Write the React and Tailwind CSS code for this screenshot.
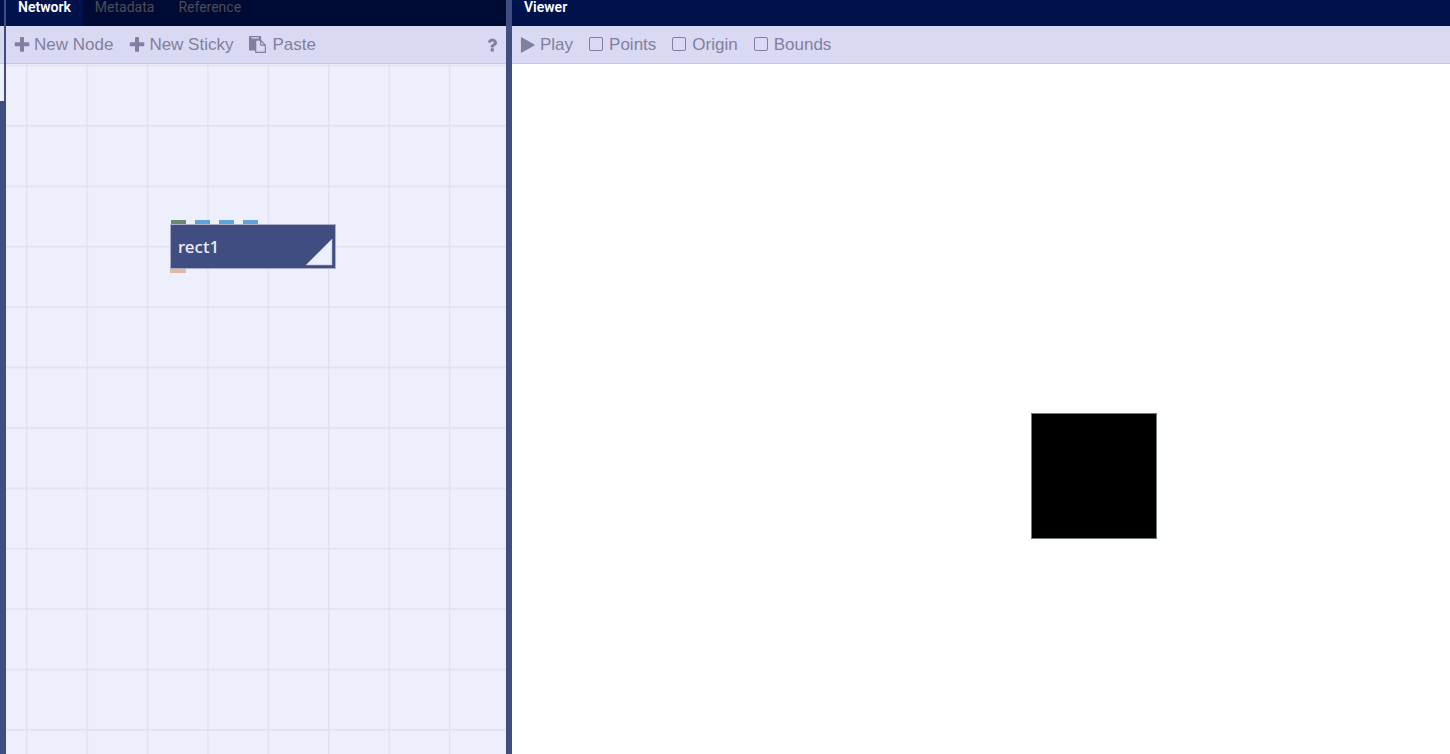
import React, { useState } from "react";

const PLUS =
  "M1600 736v192q0 40-28 68t-68 28h-416v416q0 40-28 68t-68 28h-192q-40 0-68-28t-28-68v-416h-416q-40 0-68-28t-28-68v-192q0-40 28-68t68-28h416v-416q0-40 28-68t68-28h192q40 0 68 28t28 68v416h416q40 0 68 28t28 68z";
const PASTE =
  "M768 1664h896v-640h-416q-40 0-68-28t-28-68v-416h-384v1152zm256-1440v-64q0-13-9.5-22.5t-22.5-9.5h-704q-13 0-22.5 9.5t-9.5 22.5v64q0 13 9.5 22.5t22.5 9.5h704q13 0 22.5-9.5t9.5-22.5zm256 672h299l-299-299v299zm512 128v672q0 40-28 68t-68 28h-960q-40 0-68-28t-28-68v-160h-544q-40 0-68-28t-28-68v-1344q0-40 28-68t68-28h1088q40 0 68 28t28 68v328q21 13 36 28l408 408q28 28 48 76t20 88z";
const PLAY =
  "M1576 927l-1328 738q-23 13-39.5 3t-16.5-36v-1472q0-26 16.5-36t39.5 3l1328 738q23 13 23 31t-23 31z";
const QUESTION =
  "M1088 1256v240q0 16-12 28t-28 12h-240q-16 0-28-12t-12-28v-240q0-16 12-28t28-12h240q16 0 28 12t12 28zm316-600q0 54-15.5 101t-35 76.5-55 59.5-57.5 43.5-61 35.5q-41 23-68.5 65t-27.5 67q0 17-12 32.5t-28 15.5h-240q-15 0-25.5-18.5t-10.5-37.5v-45q0-83 65-156.5t143-108.5q59-27 84-56t25-76q0-42-46.5-74t-107.5-32q-65 0-108 29-35 25-107 115-13 16-31 16-12 0-25-8l-164-125q-13-10-15.5-25t5.5-28q160-266 464-266 80 0 161 31t146 83 106 127.5 41 158.5z";

function Icon({ path, viewBox = "0 0 1792 1792", className = "size-4" }) {
  return (
    <svg viewBox={viewBox} className={className} fill="currentColor" aria-hidden="true">
      <path d={path} />
    </svg>
  );
}

function Tab({ active, children }) {
  return (
    <button
      type="button"
      className={
        "h-full px-3 pb-3 font-['Roboto','Noto_Sans',sans-serif] text-sm leading-[14px] " +
        (active ? "bg-[#00124c] font-semibold text-white" : "text-[#4c4c58]")
      }
    >
      {children}
    </button>
  );
}

function Toolbar({ children }) {
  return (
    <div className="flex h-[38px] shrink-0 items-center gap-4 border-b border-[#c6c5e8] bg-[#dad9f3] px-2 text-[#817f9f]">
      {children}
    </div>
  );
}

function Check({ label }) {
  const [on, setOn] = useState(false);
  return (
    <label className="flex items-center gap-1.5">
      <input
        type="checkbox"
        checked={on}
        onChange={(e) => setOn(e.target.checked)}
        className="mb-0.5 size-3.5 appearance-none rounded-xs border border-[#817f9f] checked:bg-[#817f9f]"
      />
      {label}
    </label>
  );
}

function Grid() {
  return (
    <svg className="block size-full" aria-hidden="true">
      <defs>
        <pattern id="grid" x="20" y="0.7" width="60.4" height="60.4" patternUnits="userSpaceOnUse">
          <path d="M0.7 0V60.4M0 0.7H60.4" fill="none" stroke="#dfe1ee" strokeWidth="1.4" />
        </pattern>
      </defs>
      <rect width="100%" height="100%" fill="url(#grid)" />
    </svg>
  );
}

function Node() {
  return (
    <div className="absolute top-[156px] left-[164px] w-[166px]">
      <div className="flex h-1 gap-[9px] pl-px">
        <i className="w-[15px] bg-[#6b8a70]" />
        <i className="w-[15px] bg-[#5fa3da]" />
        <i className="w-[15px] bg-[#5fa3da]" />
        <i className="w-[15px] bg-[#5fa3da]" />
      </div>
      <div className="flex h-[45px] items-center justify-between border border-[#a9aecb] bg-[#404d80] pr-0.5 pl-[7px]">
        <span className="font-['Noto_Sans',sans-serif] text-[17px] leading-5 font-medium text-[#eeeffc]">rect1</span>
        <svg viewBox="0 0 28 28" className="mt-auto mb-0.5 size-7" aria-hidden="true">
          <path d="M27 1V27H1Z" fill="#eeeffc" stroke="#a9aecb" strokeWidth="0.6" />
        </svg>
      </div>
      <div className="h-1 w-4 bg-[#dcbb9f]" />
    </div>
  );
}

export default function App() {
  return (
    <main className="flex h-screen overflow-hidden bg-[#404d80] font-['Liberation_Sans',sans-serif] text-[17px] leading-5">
      <div className="flex w-1 shrink-0 flex-col">
        <div className="h-[26px] bg-[#00124c]" />
        <div className="h-[38px] border-b border-[#c6c5e8] bg-[#dad9f3]" />
        <div className="h-[37px] bg-[#eeeffc]" />
      </div>

      <section className="ml-0.5 flex w-[500px] shrink-0 flex-col bg-[#eeeffc]">
        <div className="flex h-[26px] shrink-0 bg-[#000b33]">
          <Tab active>Network</Tab>
          <Tab>Metadata</Tab>
          <Tab>Reference</Tab>
        </div>
        <Toolbar>
          <button type="button" className="flex items-center gap-1">
            <Icon path={PLUS} viewBox="128 128 1536 1536" />
            New Node
          </button>
          <button type="button" className="flex items-center gap-1">
            <Icon path={PLUS} viewBox="128 128 1536 1536" />
            New Sticky
          </button>
          <button type="button" className="flex items-center gap-1.5">
            <Icon path={PASTE} className="size-[17px]" />
            Paste
          </button>
          <button type="button" aria-label="Help" className="ml-auto">
            <Icon path={QUESTION} viewBox="300 128 1204 1536" className="h-4 w-3" />
          </button>
        </Toolbar>
        <div className="relative min-h-0 flex-1">
          <Grid />
          <Node />
        </div>
      </section>

      <section className="ml-1.5 flex min-w-0 flex-1 flex-col bg-white">
        <div className="flex h-[26px] shrink-0 bg-[#00124c]">
          <Tab active>Viewer</Tab>
        </div>
        <Toolbar>
          <button type="button" className="flex items-center gap-1">
            <Icon path={PLAY} viewBox="96 96 1600 1600" />
            Play
          </button>
          <Check label="Points" />
          <Check label="Origin" />
          <Check label="Bounds" />
        </Toolbar>
        <div className="relative min-h-0 flex-1">
          <div className="absolute top-[349px] left-[519px] size-[126px] border border-[#6f7c78] bg-black" />
        </div>
      </section>
    </main>
  );
}
